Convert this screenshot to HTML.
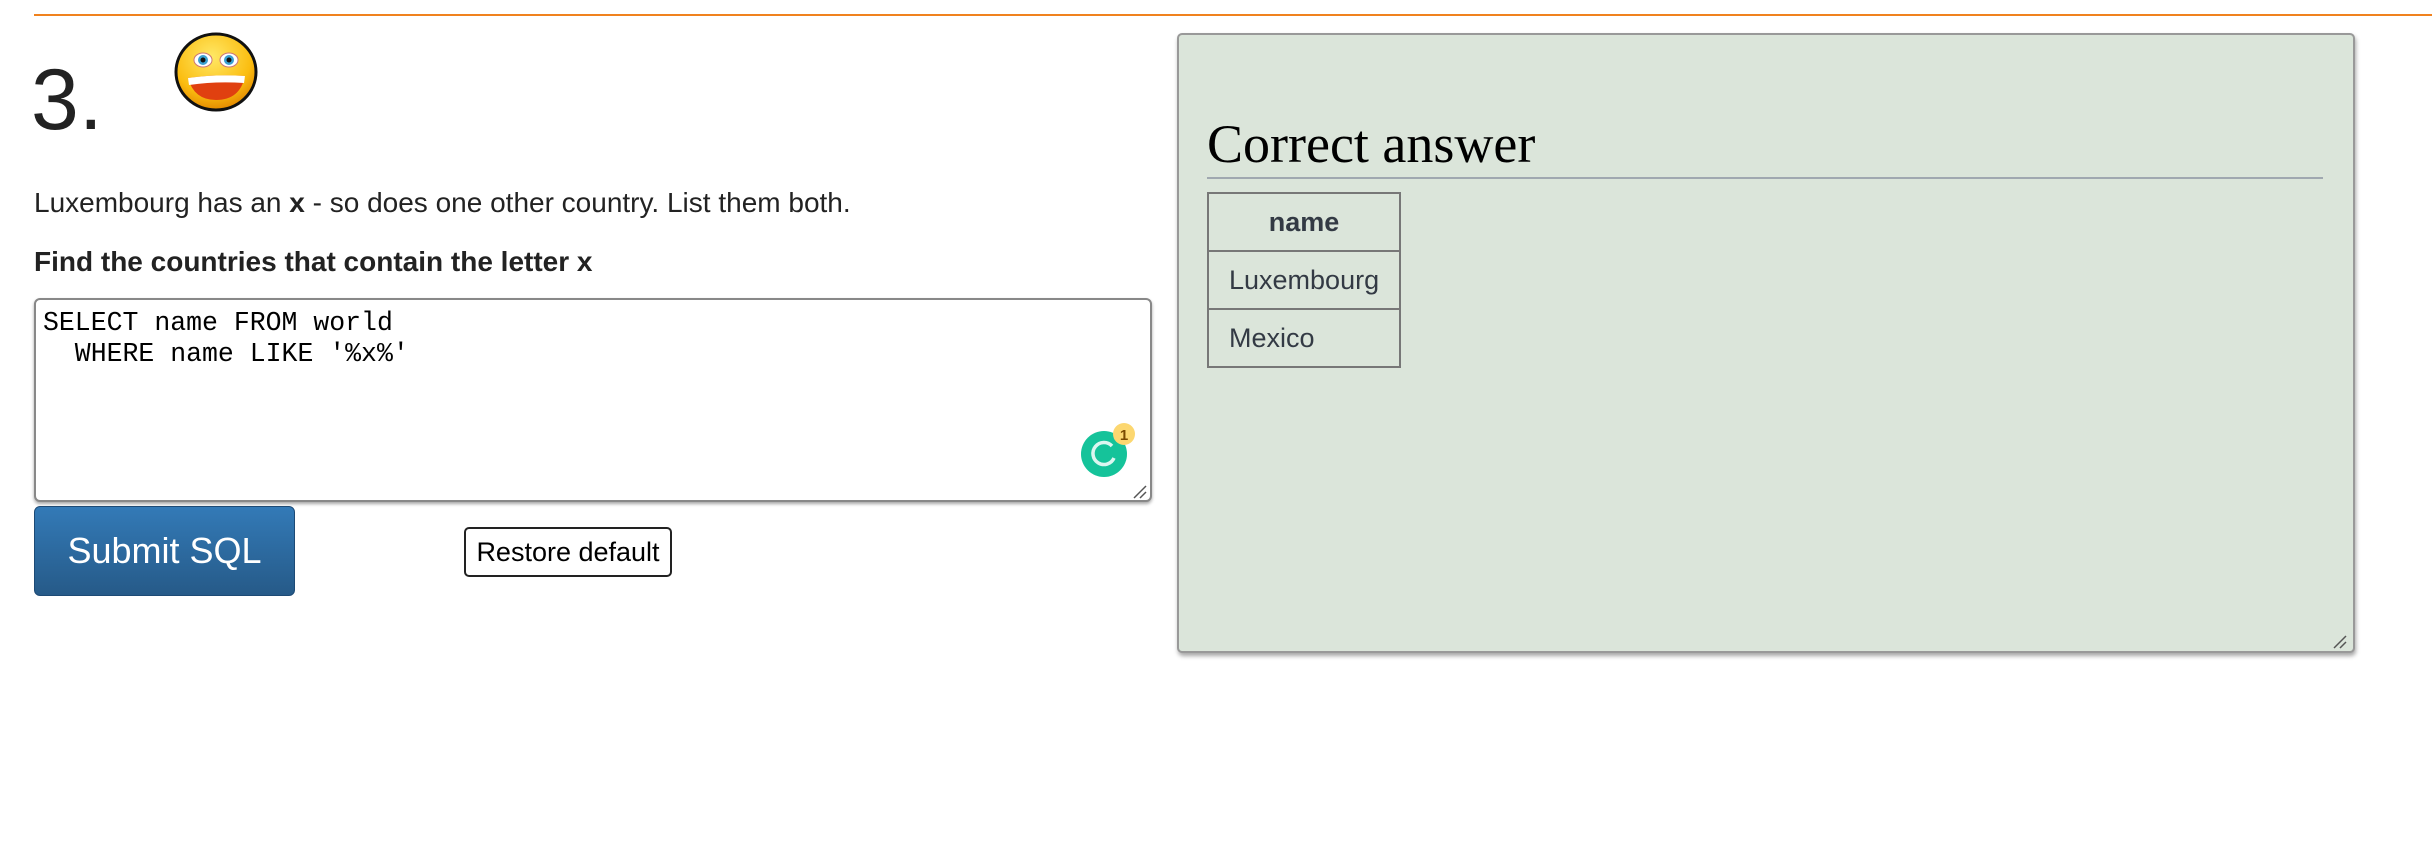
<!DOCTYPE html>
<html><head><meta charset="utf-8"><style>
html,body{margin:0;padding:0;background:#fff;width:2432px;height:852px;overflow:hidden;position:relative;font-family:"Liberation Sans",sans-serif;color:#222}
.abs{position:absolute}
.line{left:34px;right:0;top:14px;height:2px;background:#f0821e}
.num{left:31px;top:50px;font-size:86px;line-height:100px;color:#222}
.p1{left:34px;top:187px;font-size:28px;white-space:nowrap}
.p2{left:34px;top:246px;font-size:28px;font-weight:bold;white-space:nowrap}
.ta{left:34px;top:298px;width:1114px;height:200px;border:2px solid #888;border-radius:6px;box-shadow:0 2px 3px rgba(0,0,0,.35);background:#fff}
.code{left:43px;top:308px;font-family:"Liberation Mono",monospace;font-size:26.5px;line-height:31px;white-space:pre;color:#000}
.sub{left:34px;top:506px;width:259px;height:88px;border:1px solid #1d4a75;border-radius:6px;background:linear-gradient(#337ab7,#265a88);color:#fff;font-size:36px;line-height:88px;text-align:center}
.rest{left:464px;top:527px;width:204px;height:46px;border:2px solid #222;border-radius:5px;font-size:27px;line-height:46px;text-align:center;color:#000}
.panel{left:1177px;top:33px;width:1174px;height:616px;background:#dbe5da;border:2px solid #999;border-radius:5px;box-shadow:1px 3px 4px rgba(0,0,0,.35)}
.h{left:1207px;top:112px;font-family:"Liberation Serif",serif;font-size:54px;line-height:64px;color:#000;white-space:nowrap}
.hr{left:1207px;top:177px;width:1116px;height:2px;background:#a0a8b0}
table{position:absolute;left:1207px;top:192px;border-collapse:collapse;font-size:27px;color:#333a44}
td,th{border:2px solid #777;height:56px;padding:0 20px;text-align:left}
th{text-align:center}
</style></head><body>
<div class="abs line"></div>
<div class="abs num">3.</div>
<svg class="abs" style="left:170px;top:30px" width="94" height="86" viewBox="0 0 94 86">
<defs><radialGradient id="g" cx="45%" cy="30%" r="70%"><stop offset="0" stop-color="#ffe866"/><stop offset=".7" stop-color="#fbbd10"/><stop offset="1" stop-color="#e48a00"/></radialGradient></defs>
<ellipse cx="46" cy="42" rx="40" ry="38" fill="url(#g)" stroke="#111" stroke-width="3"/>
<ellipse cx="33" cy="30" rx="9" ry="7" fill="#fff" stroke="#c77" stroke-width="1"/><circle cx="33" cy="30" r="5" fill="#3aa0d0"/><circle cx="33" cy="30" r="2.5" fill="#111"/>
<ellipse cx="59" cy="30" rx="9" ry="7" fill="#fff" stroke="#c77" stroke-width="1"/><circle cx="59" cy="30" r="5" fill="#3aa0d0"/><circle cx="59" cy="30" r="2.5" fill="#111"/>
<path d="M18 48 Q46 44 75 46 Q70 70 46 70 Q24 70 18 48Z" fill="#e04010"/>
<path d="M18 48 Q46 44 75 46 L74 53 Q46 51 19 55Z" fill="#fff"/>
</svg>
<div class="abs p1">Luxembourg has an <b>x</b> - so does one other country. List them both.</div>
<div class="abs p2">Find the countries that contain the letter x</div>
<div class="abs ta"></div>
<div class="abs code">SELECT name FROM world
  WHERE name LIKE '%x%'</div>
<svg class="abs" style="left:1078px;top:420px" width="70" height="80">
<circle cx="26" cy="34" r="23" fill="#15c39a"/>
<path d="M34 26 A11 11 0 1 0 36 38" fill="none" stroke="#fff" stroke-width="3.5" opacity=".85"/>
<circle cx="46" cy="14" r="11" fill="#fcd770"/>
<text x="46" y="20" font-size="15" font-weight="bold" text-anchor="middle" fill="#7a4a00" font-family="Liberation Sans">1</text>
<path d="M56 78 L68 66 M62 78 L68 72" stroke="#555" stroke-width="1.5"/>
</svg>
<div class="abs sub">Submit SQL</div>
<div class="abs rest">Restore default</div>
<div class="abs panel"></div>
<div class="abs h">Correct answer</div>
<div class="abs hr"></div>
<table><tr><th>name</th></tr><tr><td>Luxembourg</td></tr><tr><td>Mexico</td></tr></table>
<svg class="abs" style="left:2330px;top:630px" width="20" height="20"><path d="M4 18 L16 6 M10 18 L16 12" stroke="#555" stroke-width="1.5"/></svg>
</body></html>
